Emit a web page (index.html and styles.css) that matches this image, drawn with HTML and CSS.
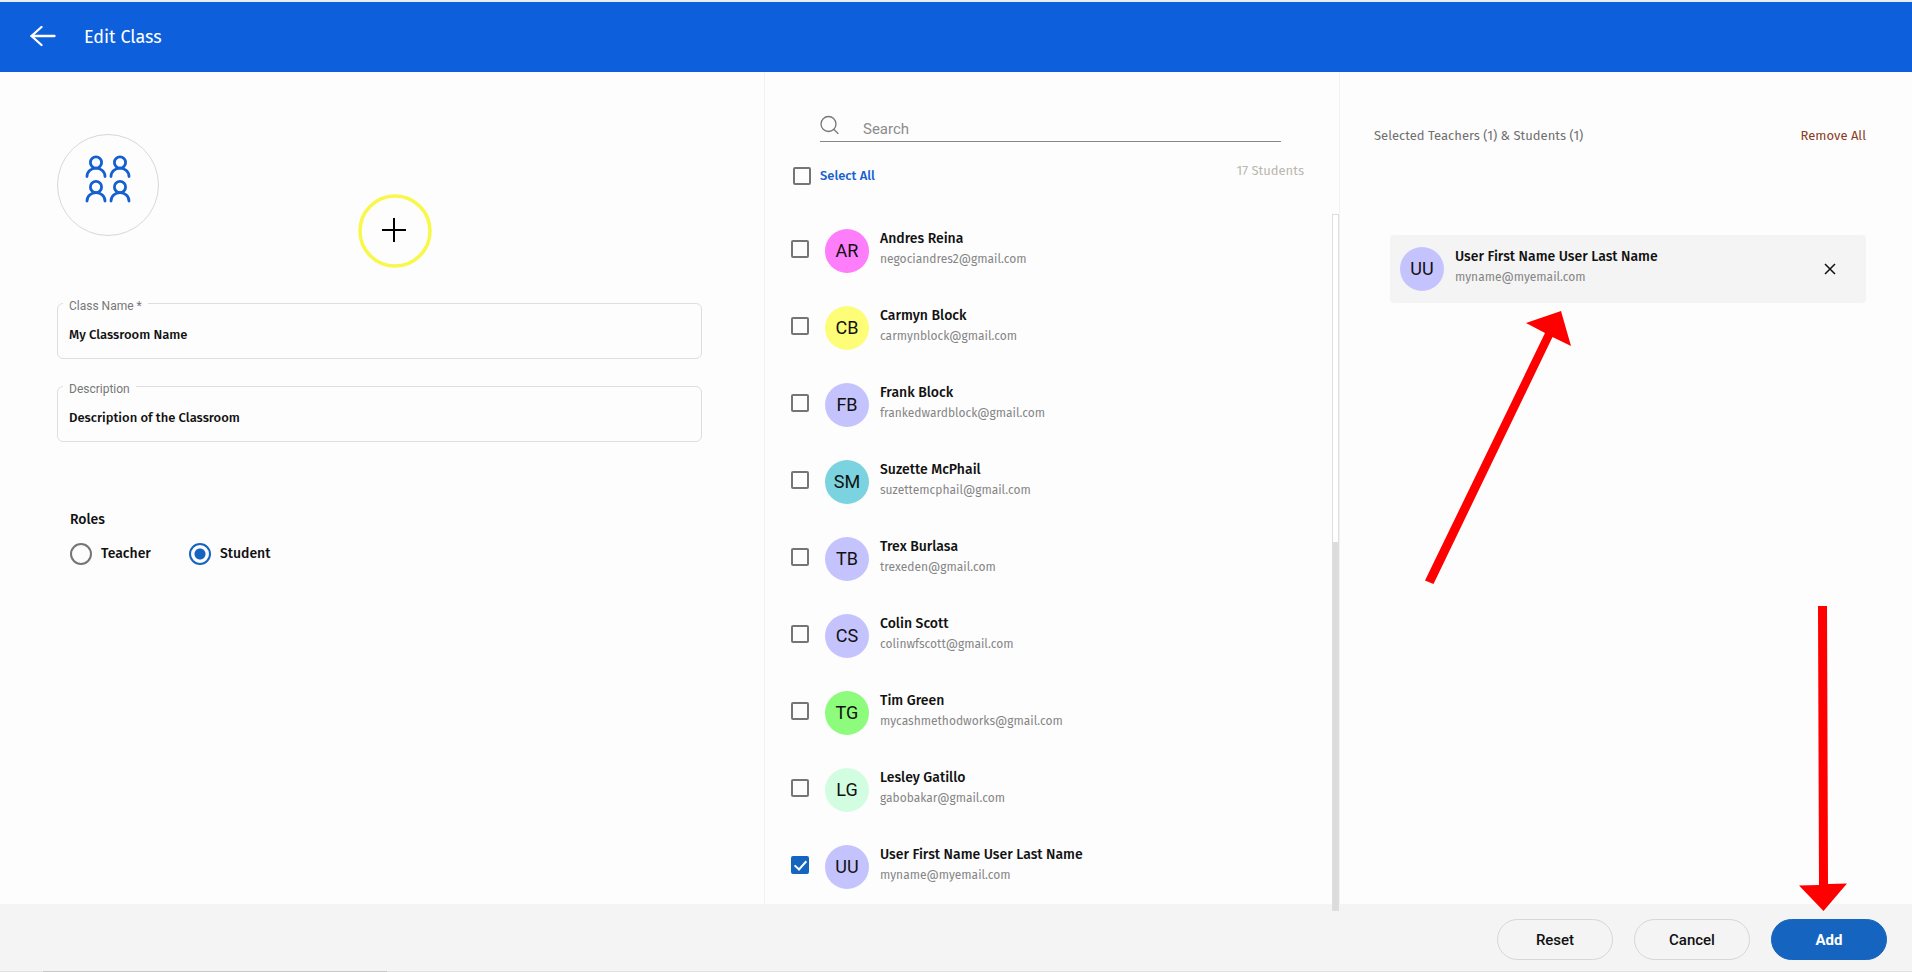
FILE: index.html
```html
<!DOCTYPE html>
<html lang="en">
<head>
    <meta charset="UTF-8">
    <meta name="viewport" content="width=device-width, initial-scale=1.0">
    <title>Edit Class</title>
    <link rel="stylesheet" href="styles.css">
</head>
<body>
    <header class="topbar">
        <button class="back-btn" type="button" aria-label="Back">
            <svg width="26" height="22" viewBox="0 0 26 22" fill="none" stroke="currentColor" stroke-width="2.300" stroke-linecap="round" stroke-linejoin="round">
                <path d="M24.500 10H1.500"></path>
                <path d="M11.500 1L1.500 10L11.500 19"></path>
            </svg>
        </button>
        <h1 class="title">Edit Class</h1>
    </header>

    <main class="columns">
        <form class="details">
            <div class="class-icon">
                <svg width="46" height="48" viewBox="0 0 46 48" fill="none" stroke="currentColor" stroke-width="2.800" stroke-linecap="round">
                    <g id="person">
                        <circle cx="11" cy="7.500" r="5.600"></circle>
                        <path d="M2 21.500c0-5 4-8.400 9-8.400s9 3.400 9 8.400"></path>
                    </g>
                    <use href="#person" x="24"></use>
                    <use href="#person" y="24.500"></use>
                    <use href="#person" x="24" y="24.500"></use>
                </svg>
            </div>

            <div class="field">
                <label for="className">Class Name *</label>
                <input type="text" id="className" value="My Classroom Name">
            </div>
            <div class="field">
                <label for="description">Description</label>
                <input type="text" id="description" value="Description of the Classroom">
            </div>

            <fieldset class="roles">
                <legend>Roles</legend>
                <label class="role"><input type="radio" name="role">Teacher</label>
                <label class="role"><input type="radio" name="role" checked>Student</label>
            </fieldset>

            <!-- pointer highlight -->
            <svg class="pointer" width="74" height="74" viewBox="0 0 74 74" fill="none">
                <circle cx="37" cy="37" r="35" stroke="#f8f84a" stroke-width="3.500"></circle>
                <path d="M36 24v24M24 36h24" stroke="#000" stroke-width="2"></path>
            </svg>
        </form>

        <section class="people">
            <div class="search">
                <svg width="20" height="20" viewBox="0 0 20 20" fill="none" stroke="currentColor" stroke-width="1.300" stroke-linecap="round">
                    <circle cx="8.500" cy="10" r="7.500"></circle>
                    <path d="M14 15.500l4 4"></path>
                </svg>
                <input type="search" placeholder="Search" aria-label="Search">
            </div>

            <div class="list-head">
                <label class="select-all"><input class="check" type="checkbox">Select All</label>
                <span class="count">17 Students</span>
            </div>

            <div class="list">
                <label class="person">
                    <input class="check" type="checkbox">
                    <span class="avatar pink">AR</span>
                    <span class="info"><b>Andres Reina</b><small>negociandres2@gmail.com</small></span>
                </label>
                <label class="person">
                    <input class="check" type="checkbox">
                    <span class="avatar yellow">CB</span>
                    <span class="info"><b>Carmyn Block</b><small>carmynblock@gmail.com</small></span>
                </label>
                <label class="person">
                    <input class="check" type="checkbox">
                    <span class="avatar">FB</span>
                    <span class="info"><b>Frank Block</b><small>frankedwardblock@gmail.com</small></span>
                </label>
                <label class="person">
                    <input class="check" type="checkbox">
                    <span class="avatar teal">SM</span>
                    <span class="info"><b>Suzette McPhail</b><small>suzettemcphail@gmail.com</small></span>
                </label>
                <label class="person">
                    <input class="check" type="checkbox">
                    <span class="avatar">TB</span>
                    <span class="info"><b>Trex Burlasa</b><small>trexeden@gmail.com</small></span>
                </label>
                <label class="person">
                    <input class="check" type="checkbox">
                    <span class="avatar">CS</span>
                    <span class="info"><b>Colin Scott</b><small>colinwfscott@gmail.com</small></span>
                </label>
                <label class="person">
                    <input class="check" type="checkbox">
                    <span class="avatar green">TG</span>
                    <span class="info"><b>Tim Green</b><small>mycashmethodworks@gmail.com</small></span>
                </label>
                <label class="person">
                    <input class="check" type="checkbox">
                    <span class="avatar mint">LG</span>
                    <span class="info"><b>Lesley Gatillo</b><small>gabobakar@gmail.com</small></span>
                </label>
                <label class="person">
                    <input class="check" type="checkbox" checked>
                    <span class="avatar">UU</span>
                    <span class="info"><b>User First Name User Last Name</b><small>myname@myemail.com</small></span>
                </label>
                <div class="scrollbar"><div class="thumb"></div></div>
            </div>
        </section>

        <section class="selected">
            <div class="selected-head">
                <span>Selected Teachers (1) &amp; Students (1)</span>
                <button class="remove-all" type="button">Remove All</button>
            </div>
            <div class="card">
                <span class="avatar">UU</span>
                <span class="info"><b>User First Name User Last Name</b><small>myname@myemail.com</small></span>
                <button class="close-btn" type="button" aria-label="Remove">
                    <svg width="12" height="12" viewBox="0 0 12 12" fill="none" stroke="currentColor" stroke-width="1.500">
                        <path d="M1 1l10 10M11 1L1 11"></path>
                    </svg>
                </button>
                <svg class="arrow-card" width="148" height="276" viewBox="0 0 148 276" fill="#fe0000">
                    <path d="M137 1L147 36L128.500 27L9.500 274L1 270.500L121 23L102 13Z"></path>
                </svg>
            </div>
        </section>
    </main>

    <footer class="actions">
        <button class="btn" type="button">Reset</button>
        <button class="btn" type="button">Cancel</button>
        <button class="btn primary" type="button">Add</button>
        <svg class="arrow-add" width="50" height="306" viewBox="0 0 50 306" fill="#fe0000">
            <path d="M20 0H29L30 278L49 277.500L25.500 305L1 279.500L21 279Z"></path>
        </svg>
        <div class="edge"></div>
    </footer>
</body>
</html>
```

FILE: styles.css
```css
* {
    box-sizing: border-box;
}
body {
    margin: 0;
    min-height: 100vh;
    display: flex;
    flex-direction: column;
    border-top: 2px solid #e9eef5;
    background-color: #fdfdfd;
    color: #111;
    font-family: "Fira Sans", Roboto, sans-serif;
    font-size: 14px;
    line-height: 20px;
}
input, button {
    font: inherit;
    color: inherit;
}
button {
    padding: 0;
    border: none;
    background: none;
    cursor: pointer;
}
svg {
    display: block;
}

/* header */
.topbar {
    height: 70px;
    padding: 0 30px;
    display: flex;
    align-items: center;
    gap: 28px;
    background-color: #0d5fdb;
    color: #fff;
}
.title {
    margin: 0;
    font-size: 18px;
    font-weight: 400;
}

.columns {
    flex: 1;
    display: grid;
    grid-template-columns: 191fr 144fr 143fr;
}

/* left column */
.details {
    position: relative;
    padding: 62px 62px 40px 57px;
}
.class-icon {
    width: 102px;
    height: 102px;
    margin-bottom: 67px;
    padding-bottom: 12px;
    display: flex;
    align-items: center;
    justify-content: center;
    border: 1px solid #d8d8d8;
    border-radius: 50%;
    color: #1560d0;
}
.field {
    position: relative;
    margin-bottom: 27px;
}
.field label {
    position: absolute;
    top: -7px;
    left: 6px;
    padding: 0 6px;
    background-color: #fdfdfd;
    color: #777;
    font-family: Roboto, sans-serif;
    font-size: 12px;
}
.field input {
    display: block;
    width: 100%;
    height: 56px;
    padding: 6px 11px 0;
    border: 1px solid #dedede;
    border-radius: 6px;
    background: none;
    font-size: 13px;
    font-weight: 500;
}
.roles {
    margin: 68px 0 0;
    padding: 0 13px;
    border: none;
    display: flex;
    gap: 38px;
    font-weight: 500;
}
.roles legend {
    padding: 0;
    margin-bottom: 13px;
}
.role {
    display: flex;
    align-items: center;
    gap: 9px;
}
.role input {
    appearance: none;
    width: 22px;
    height: 22px;
    margin: 0;
    border: 2px solid #757575;
    border-radius: 50%;
}
.role input:checked {
    border-color: #1565c0;
    background: radial-gradient(circle, #1565c0 5px, transparent 6px);
}
.pointer {
    position: absolute;
    top: 122px;
    left: 358px;
}

/* middle column */
.people {
    display: flex;
    flex-direction: column;
    border-left: 1px solid #f1f1f1;
    border-right: 1px solid #f1f1f1;
}
.search {
    margin: 42px 58px 0 55px;
    height: 28px;
    display: flex;
    gap: 23px;
    border-bottom: 1px solid #888;
    color: #777;
}
.search input {
    flex: 1;
    height: 30px;
    padding: 0;
    border: none;
    outline: none;
    background: none;
    font-family: Roboto, sans-serif;
    font-size: 15px;
}
.search input::placeholder {
    color: #8c8c8c;
}
.list-head {
    margin: 19px 35px 0 28px;
    display: flex;
    justify-content: space-between;
}
.select-all {
    margin-top: 5px;
    display: flex;
    align-items: center;
    gap: 9px;
    color: #1560d0;
    font-size: 13px;
    font-weight: 500;
}
.count {
    color: #b9b7ae;
    font-size: 13px;
}
.check {
    appearance: none;
    width: 18px;
    height: 18px;
    margin: 0;
    border: 2px solid #757575;
    border-radius: 2px;
}
.check:checked {
    position: relative;
    border-color: #1565c0;
    background-color: #1565c0;
}
.check:checked::after {
    content: "";
    position: absolute;
    top: 0;
    left: 4px;
    width: 5px;
    height: 10px;
    border: solid #fff;
    border-width: 0 2px 2px 0;
    transform: rotate(42deg);
}
.list {
    position: relative;
    flex: 1;
    margin-top: 30px;
    padding-left: 26px;
    display: flex;
    flex-direction: column;
    gap: 7px;
}
.person {
    height: 70px;
    display: flex;
    align-items: center;
}
.person .check {
    margin: 0 16px 5px 0;
}
.avatar {
    width: 44px;
    height: 44px;
    border-radius: 50%;
    background-color: #c5c3fd;
    font-family: Roboto, sans-serif;
    font-size: 18px;
    line-height: 44px;
    text-align: center;
}
.pink { background-color: #fd7dfb; }
.yellow { background-color: #fdfd78; }
.teal { background-color: #7ad3de; }
.green { background-color: #8dfb7c; }
.mint { background-color: #d3fde0; }
.info {
    margin: 0 0 5px 11px;
    display: flex;
    flex-direction: column;
}
.info b {
    font-weight: 500;
}
.info small {
    color: #858585;
    font-size: 12px;
}
.scrollbar {
    position: absolute;
    z-index: 1;
    top: -2px;
    right: 0;
    bottom: -7px;
    width: 7px;
    display: flex;
    flex-direction: column;
    justify-content: flex-end;
    border: 1px solid #dedede;
    background-color: #fff;
}
.thumb {
    height: 53%;
    background-color: #dcdcdc;
}

/* right column */
.selected {
    padding: 54px 46px 0 34px;
}
.selected-head {
    display: flex;
    justify-content: space-between;
    color: #6f6f6f;
    font-size: 13px;
}
.remove-all {
    color: #8c3c1e;
}
.card {
    position: relative;
    margin: 89px 0 0 16px;
    height: 68px;
    padding: 0 30px 0 10px;
    display: flex;
    align-items: center;
    border-radius: 4px;
    background-color: #f4f4f4;
}
.close-btn {
    margin-left: auto;
}
.arrow-card {
    position: absolute;
    top: 75px;
    left: 34px;
}

/* footer */
.actions {
    position: relative;
    height: 68px;
    padding: 15px 25px 0;
    display: flex;
    justify-content: flex-end;
    gap: 21px;
    border-bottom: 1px solid #e2e2e2;
    background-color: #f4f4f4;
}
.btn {
    width: 116px;
    height: 41px;
    border: 1px solid #d6d6d6;
    border-radius: 21px;
    font-family: Roboto, sans-serif;
    font-size: 15px;
    font-weight: 500;
}
.primary {
    border-color: #1565c0;
    background-color: #1565c0;
    color: #fff;
    font-weight: 700;
}
.arrow-add {
    position: absolute;
    right: 64px;
    bottom: 59px;
}
.edge {
    position: absolute;
    left: 43px;
    bottom: -1px;
    width: 18%;
    height: 1px;
    background-color: #c8c8c8;
}
```
